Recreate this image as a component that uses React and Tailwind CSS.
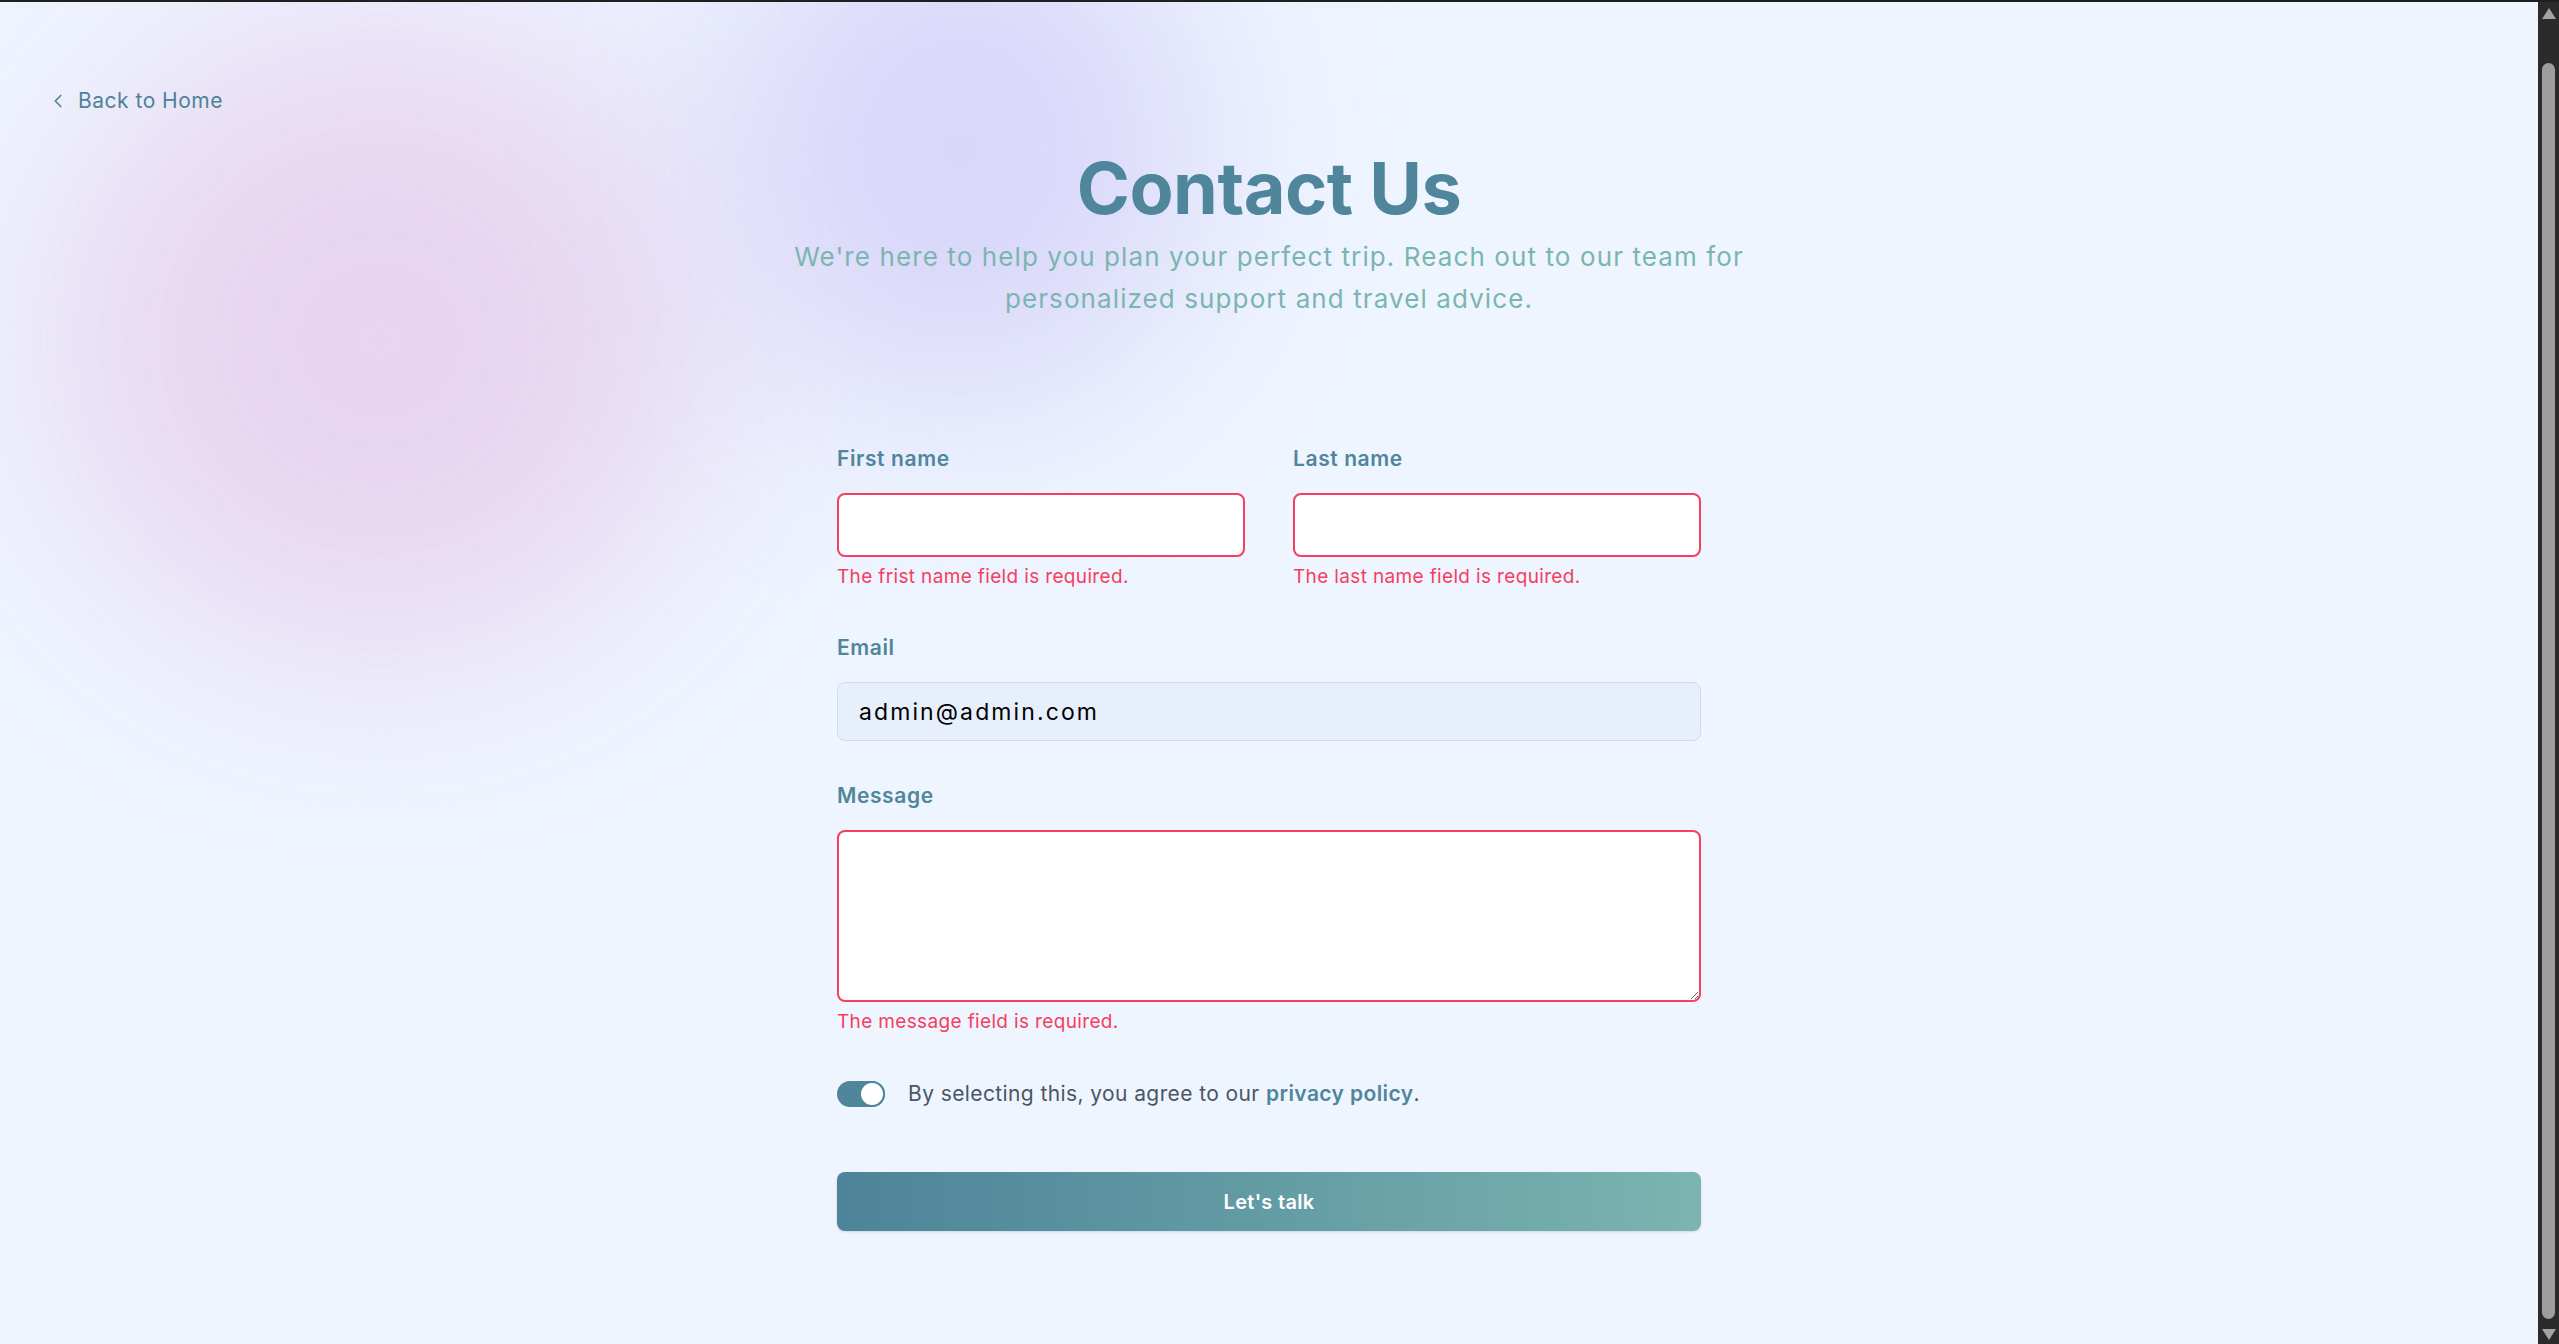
import { useState } from "react";
import { ChevronLeft } from "lucide-react";

const font = { fontFamily: "Inter, 'Open Sans', sans-serif" };

function Field({ label, error, children }) {
  return (
    <div className="flex flex-col">
      <label className="text-[21px] leading-[28px] font-semibold tracking-[0.6px] text-[#4f869b]">{label}</label>
      <div className="mt-[20px]">{children}</div>
      {error && <p className="mt-[7px] text-[19px] leading-[26px] tracking-[0.35px] text-[#f43f5e]">{error}</p>}
    </div>
  );
}

function Scrollbar() {
  return (
    <div className="flex w-[21px] shrink-0 flex-col items-center bg-[#2b2b2b] pt-[8px] pb-[4px]">
      <span className="h-0 w-0 border-x-[7px] border-b-[11px] border-x-transparent border-b-[#a3a3a3]" />
      <span className="mt-[44px] w-[13px] flex-1 rounded-full bg-[#9e9e9e]" />
      <span className="mt-[10px] h-0 w-0 border-x-[7px] border-t-[11px] border-x-transparent border-t-[#a3a3a3]" />
    </div>
  );
}

export default function App() {
  const [agree, setAgree] = useState(true);
  const [email, setEmail] = useState("admin@admin.com");

  return (
    <div className="relative flex h-[1344px] overflow-hidden bg-[#eef5ff]" style={font}>
      <div className="absolute left-0 top-0 z-10 h-[2px] w-full bg-[#1f1f1f]" />

      <main className="relative flex-1 overflow-hidden">
        <div className="absolute left-[50px] top-[20px] h-[640px] w-[660px] rounded-full bg-[#e6cfee] opacity-85 blur-[110px]" />
        <div className="absolute left-[720px] top-[-110px] h-[520px] w-[480px] rounded-full bg-[#d7d3f9] opacity-90 blur-[100px]" />

        <div className="relative">
          <div className="pl-[47px] pt-[87px]">
            <a href="#" className="inline-flex items-center gap-[9px] text-[21px] leading-[28px] tracking-[0.5px] text-[#4f8199]">
              <ChevronLeft size={22} strokeWidth={1.8} />
              Back to Home
            </a>
          </div>

          <div className="mt-[34px] flex flex-col items-center text-center">
            <h1 className="text-[72px] leading-[72px] font-bold tracking-[-0.5px] text-[#4f869b]">Contact Us</h1>
            <p className="mt-[12px] text-[26px] leading-[42px] tracking-[1.1px] text-[#7bb5b0]">
              We're here to help you plan your perfect trip. Reach out to our team for
              <br />
              personalized support and travel advice.
            </p>
          </div>

          <form className="mx-auto mt-[125px] w-[864px]" onSubmit={(e) => e.preventDefault()}>
            <div className="grid grid-cols-2 gap-x-[48px]">
              <Field label="First name" error="The frist name field is required.">
                <input className="h-[64px] w-full rounded-[8px] border-2 border-[#f43f5e] bg-white px-5 text-[21px] outline-none" />
              </Field>
              <Field label="Last name" error="The last name field is required.">
                <input className="h-[64px] w-full rounded-[8px] border-2 border-[#f43f5e] bg-white px-5 text-[21px] outline-none" />
              </Field>
            </div>

            <div className="mt-[44px]">
              <Field label="Email">
                <input
                  value={email}
                  onChange={(e) => setEmail(e.target.value)}
                  className="h-[59px] w-full rounded-[8px] border border-[#d3dbe8] bg-[#e8effc] px-[21px] text-[23px] tracking-[2.1px] text-black outline-none"
                />
              </Field>
            </div>

            <div className="mt-[41px]">
              <Field label="Message" error="The message field is required.">
                <textarea className="block h-[172px] w-full resize-y rounded-[8px] border-2 border-[#f43f5e] bg-white px-5 py-3 text-[21px] outline-none" />
              </Field>
            </div>

            <div className="mt-[45px] flex h-[28px] items-center gap-[23px]">
              <button
                type="button"
                onClick={() => setAgree(!agree)}
                className={`flex h-[26px] w-[48px] items-center rounded-full ${agree ? "justify-end bg-[#4f869b]" : "justify-start bg-gray-300"}`}
              >
                <span className="h-[26px] w-[26px] rounded-full border-2 border-[#4f869b] bg-white" />
              </button>
              <p className="text-[21px] leading-[28px] tracking-[0.4px] text-[#4b5563]">
                By selecting this, you agree to our{" "}
                <a href="#" className="font-semibold text-[#4f869b]">privacy policy</a>.
              </p>
            </div>

            <button
              type="submit"
              className="mt-[64px] flex h-[59px] w-full items-center justify-center rounded-[8px] bg-gradient-to-r from-[#4d8499] to-[#7bb4b0] text-[20px] font-semibold tracking-[0.3px] text-white shadow-sm"
            >
              Let's talk
            </button>
          </form>
        </div>
      </main>

      <Scrollbar />
    </div>
  );
}
